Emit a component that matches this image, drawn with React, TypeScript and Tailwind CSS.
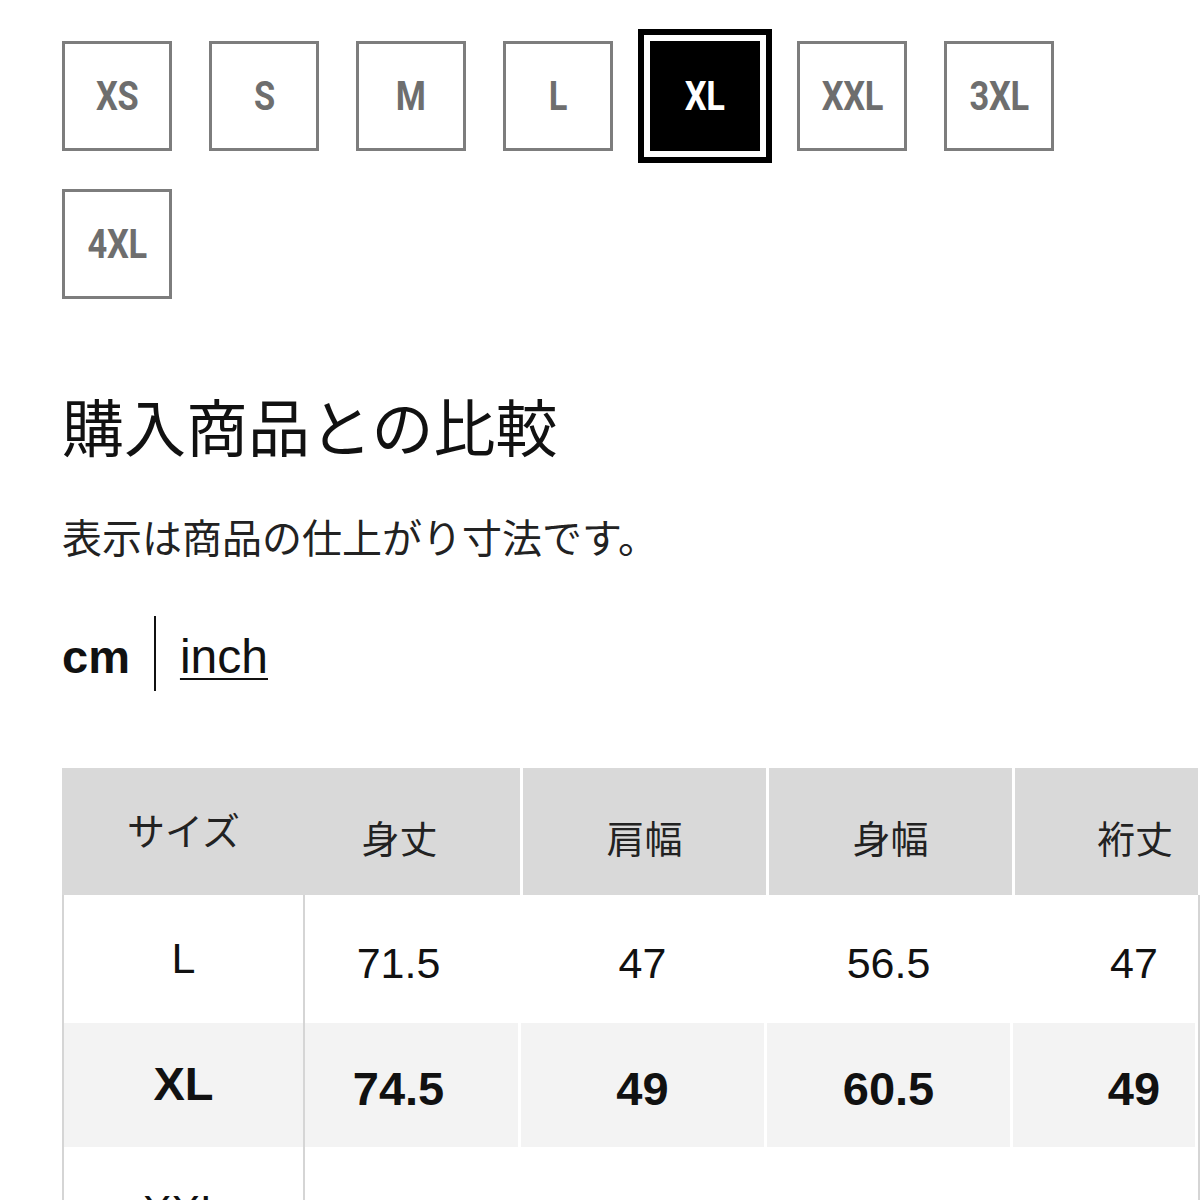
import React from 'react'

// サイズ選択 + 購入商品との比較テーブル

const SIZES = ['XS', 'S', 'M', 'L', 'XL', 'XXL', '3XL', '4XL']
const SELECTED = 'XL'

const JP = { fontFamily: '"Noto Sans CJK JP", "Noto Sans", sans-serif' }
const LATIN = { fontFamily: '"Liberation Sans", Arial, "Noto Sans CJK JP", sans-serif' }
const DIN = { fontFamily: 'Roboto, "Liberation Sans", sans-serif' }

const HEAD = ['身丈', '肩幅', '身幅', '裄丈']
const ROWS = [
  { size: 'L', values: ['71.5', '47', '56.5', '47'], bold: false, bg: 'bg-white' },
  { size: 'XL', values: ['74.5', '49', '60.5', '49'], bold: true, bg: 'bg-[#f3f3f3]' },
  { size: 'XXL', values: ['77.5', '51', '64.5', '51'], bold: false, bg: 'bg-white' },
]

function SizeBox({ label }: { label: string }) {
  const active = label === SELECTED
  return (
    <div
      className={
        active
          ? 'w-[110px] h-[110px] flex items-center justify-center bg-black outline-[6px] outline-black outline-offset-[6px]'
          : 'w-[110px] h-[110px] flex items-center justify-center border-[3px] border-[#7d7d7d] bg-white'
      }
    >
      <span
        style={DIN}
        className={`inline-block scale-x-[0.84] text-[41px] font-bold leading-none tracking-[-0.5px] ${active ? 'text-white' : 'text-[#6e6e6e]'}`}
      >
        {label}
      </span>
    </div>
  )
}

export default function App() {
  return (
    <div className="h-[1200px] w-[1200px] bg-white overflow-hidden pt-[41px] pl-[62px]">
      {/* サイズ */}
      <div className="flex flex-wrap w-[1060px] gap-x-[37px] gap-y-[38px]">
        {SIZES.map(s => <SizeBox key={s} label={s} />)}
      </div>

      <h2 style={JP} className="mt-[95px] text-[62px] leading-none font-normal text-[#111]">
        購入商品との比較
      </h2>
      <p style={JP} className="mt-[60px] text-[40px] leading-none text-[#222]">
        表示は商品の仕上がり寸法です。
      </p>

      {/* 単位 */}
      <div className="mt-[60px] h-[75px] flex items-center" style={LATIN}>
        <span className="text-[47px] font-bold text-[#111] leading-none pt-[6px]">cm</span>
        <span className="mx-[24px] w-[2px] h-[75px] bg-[#111]" />
        <span className="text-[48px] text-[#111] leading-none underline decoration-2 underline-offset-[5px] pt-[6px]">inch</span>
      </div>

      {/* 比較テーブル */}
      <div className="mt-[77px] w-[1138px]">
        <div className="flex h-[127px] gap-[3px] bg-white">
          <div className="w-[458px] flex bg-[#d9d9d9]">
            <div style={JP} className="w-[243px] flex items-center justify-center pb-[6px] text-[38px] text-[#222]">サイズ</div>
            <div style={JP} className="w-[215px] flex items-center justify-center pt-[10px] pr-[26px] text-[38px] text-[#222]">{HEAD[0]}</div>
          </div>
          <div style={JP} className="w-[243px] flex items-center justify-center pt-[10px] text-[38px] text-[#222] bg-[#d9d9d9]">{HEAD[1]}</div>
          <div style={JP} className="w-[243px] flex items-center justify-center pt-[10px] text-[38px] text-[#222] bg-[#d9d9d9]">{HEAD[2]}</div>
          <div style={JP} className="w-[183px] flex items-center justify-start pl-[82px] pt-[10px] text-[38px] text-[#222] bg-[#d9d9d9] whitespace-nowrap">{HEAD[3]}</div>
        </div>
        {ROWS.map((r, idx) => (
          <div
            key={r.size}
            style={LATIN}
            className={`flex ${idx === 1 ? 'h-[124px]' : 'h-[128px]'} border-l-2 border-r-2 border-[#d5d5d5] bg-white text-[#111] ${r.bold ? 'font-bold text-[47px]' : 'text-[43px]'}`}
          >
            <div className={`w-[241px] flex items-center justify-center pb-[2px] border-r-2 border-[#d5d5d5] ${r.bg}`}>
              {r.size}
            </div>
            <div className={`w-[213px] mr-[3px] flex items-center justify-center pt-[8px] pr-[26px] ${r.bg}`}>{r.values[0]}</div>
            <div className={`w-[243px] mr-[3px] flex items-center justify-center pt-[8px] ${r.bg}`}>{r.values[1]}</div>
            <div className={`w-[243px] mr-[3px] flex items-center justify-center pt-[8px] ${r.bg}`}>{r.values[2]}</div>
            <div className={`w-[182px] flex items-center justify-center pt-[8px] pl-[60px] ${r.bg}`}>{r.values[3]}</div>
          </div>
        ))}
      </div>
    </div>
  )
}
